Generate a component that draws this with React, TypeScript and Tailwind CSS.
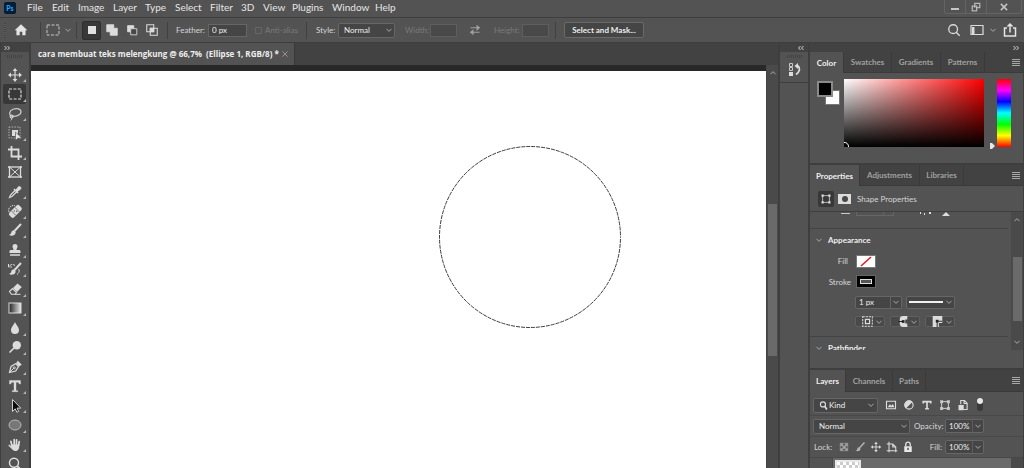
import type { ReactNode } from "react";

const Caret = ({ className = "" }: { className?: string }) => (
    <svg viewBox="0 0 8 8" className={`w-2 h-2 shrink-0 fill-none stroke-[#a8a8a8] pointer-events-none ${className}`}>
        <path d="M1.5 2.8 4 5.4 6.5 2.8" />
    </svg>
);

const Chevrons = ({ flip = false }: { flip?: boolean }) => (
    <svg viewBox="0 0 8 6" className={`w-2 h-[6px] fill-none stroke-[#d4d4d4] ${flip ? "rotate-180" : ""}`}>
        <path d="M1.5 1 3.5 3 1.5 5M4.5 1 6.5 3 4.5 5" />
    </svg>
);

const Icon = ({ children, className = "w-4 h-4" }: { children: ReactNode; className?: string }) => (
    <svg viewBox="0 0 16 16" className={`shrink-0 fill-none stroke-[#dcdcdc] ${className}`}>
        {children}
    </svg>
);

const Divider = () => <span className="w-px h-[17px] bg-[#404040] shrink-0" />;

const FILL = "#dcdcdc";

const moveShape = (
    <>
        <path d="M8 3v10M3 8h10" strokeWidth="1.2" />
        <path d="M8 1 10.4 4H5.6zM8 15l2.4-3H5.6zM1 8l3-2.4v4.8zM15 8l-3-2.4v4.8z" fill={FILL} stroke="none" />
    </>
);

const brushShape = (
    <>
        <path d="M14 2 7.5 9" strokeWidth="2" />
        <path d="M7.6 8.4C5.8 8 4.6 9 4.3 10.6 4 12 3.2 12.7 2 13c2.4 1.3 6.2.7 6.7-2.3z" fill={FILL} stroke="none" />
    </>
);

const tools: { name: string; art: ReactNode }[] = [
    { name: "Move", art: moveShape },
    { name: "Rectangular Marquee", art: <rect x="2" y="3" width="12" height="10" strokeDasharray="3 1.4" strokeWidth="1.2" /> },
    {
        name: "Lasso",
        art: (
            <>
                <path d="M4.5 10.3C1.5 8.6 2.3 4.6 6 3.2c3.6-1.4 8-.5 8 2.5 0 3-4.6 5.3-9.5 4.6" strokeWidth="1.2" stroke="#c8c8c8" />
                <circle cx="4.6" cy="10.5" r="1.5" strokeWidth="1.1" />
                <path d="M4.5 12c.6 1 0 2-.8 2.5" />
            </>
        ),
    },
    {
        name: "Object Selection",
        art: (
            <>
                <rect x="2" y="2" width="11" height="11" strokeDasharray="1.5 1.2" stroke="#b0b0b0" />
                <path d="M5 5h6v3.500H8.500V11H5z" fill={FILL} stroke="none" />
                <path d="M8.500 7v8.500l2.300-2.300h4z" fill="#e8e8e8" stroke="#535353" strokeWidth=".6" />
            </>
        ),
    },
    { name: "Crop", art: <path d="M4.5 1v10.500H15M1 4.500h10.500V15" strokeWidth="1.800" /> },
    {
        name: "Frame",
        art: (
            <>
                <rect x="2.5" y="3" width="11" height="10" strokeWidth="1.3" />
                <path d="M2.5 3l11 10M13.5 3l-11 10" />
                <path d="M1 3h2M13 3h2M1 13h2M13 13h2" strokeWidth="1.5" />
            </>
        ),
    },
    {
        name: "Eyedropper",
        art: (
            <>
                <path d="M8.5 6 3.5 11l-1 2.500L5 12.500l5-5" strokeWidth="1.2" />
                <path d="M7 5l4 4M9.5 6.500l3.300-3.300" strokeWidth="1.5" />
                <path d="m9 6 2.500-3.200a1.600 1.600 0 0 1 2.200 2.200L10.300 7.500z" fill={FILL} strokeWidth="1" />
            </>
        ),
    },
    {
        name: "Spot Healing",
        art: (
            <>
                <path d="M2 9C.5 5 4 1.500 8 2.800" strokeDasharray="1.5 1" />
                <g transform="rotate(-45 8.5 8.5)">
                    <rect x="1.5" y="5" width="14" height="6.600" rx="2" fill={FILL} stroke="none" />
                    <path d="M6 5v6.600M11 5v6.600" stroke="#666" strokeWidth=".8" />
                    <path d="M7.5 7.300h1M9 9.300h1" stroke="#444" strokeWidth="1.2" />
                </g>
            </>
        ),
    },
    { name: "Brush", art: brushShape },
    {
        name: "Clone Stamp",
        art: (
            <path
                d="M5.5 4.500a2.500 2.500 0 0 1 5 0C10.500 6 9.500 6.500 9.500 8H12c1 0 1.500.5 1.500 1.500V11h-11V9.500C2.500 8.500 3 8 4 8h2.500C6.500 6.500 5.500 6 5.500 4.500zM3 12.300h10v1.500H3z"
                fill={FILL}
                stroke="none"
            />
        ),
    },
    {
        name: "History Brush",
        art: (
            <>
                {brushShape}
                <path d="M2 5.500C4 3 6 3 8 4.500M1.500 3v3H5M11.500 8c1.500 2 .5 4-1.500 5.500" strokeDasharray="4 .8" />
            </>
        ),
    },
    {
        name: "Eraser",
        art: (
            <>
                <path d="m2.500 10.500 3-3 4 4-1.500 1.800H4.500z" strokeWidth="1.1" />
                <path d="m6 7 4.500-4.500 4.300 3.600L10 11z" fill={FILL} stroke="none" />
                <path d="M8 13.300h5.500" />
            </>
        ),
    },
    {
        name: "Gradient",
        art: (
            <>
                <defs>
                    <linearGradient id="toolGradient">
                        <stop offset="0" stopColor="#222" />
                        <stop offset="1" stopColor="#e8e8e8" />
                    </linearGradient>
                </defs>
                <rect x="2" y="3" width="12" height="10" fill="url(#toolGradient)" />
            </>
        ),
    },
    { name: "Blur", art: <path d="M8 2C7 5 4 7 4 10a4 4 0 0 0 8 0C12 7 9 5 8 2z" fill={FILL} stroke="none" /> },
    {
        name: "Dodge",
        art: (
            <>
                <circle cx="9.800" cy="6.200" r="4.200" fill={FILL} stroke="none" />
                <path d="M7.500 8.500 2.500 13.500" strokeWidth="1.600" />
            </>
        ),
    },
    {
        name: "Pen",
        art: (
            <>
                <path d="M2.500 13.500 4 7.500l4.500-2.800 3 3L8.700 12z" strokeWidth="1.2" />
                <path d="m9 4.300 1.800-2.500 4 4L12 7.400z" fill={FILL} stroke="none" />
                <path d="M3 13l3.800-3.800" />
                <circle cx="7.300" cy="8.800" r="1" />
            </>
        ),
    },
    {
        name: "Type",
        art: (
            <path
                d="M2.500 2.500h11V6h-1.300c-.2-1.300-.7-1.800-2-1.800H9v7.600c0 .7.400.9 1.800 1v.9H5.200v-.9c1.400-.1 1.800-.3 1.800-1V4.200H5.800c-1.300 0-1.800.5-2 1.800H2.500z"
                fill={FILL}
                stroke={FILL}
                strokeWidth=".4"
            />
        ),
    },
    { name: "Path Selection", art: <path d="M5.500 1.500v12L8.200 10.800l1.700 3.500 1.800-.9-1.700-3.300h3.800z" fill="#0c0c0c" stroke="#d0d0d0" /> },
    { name: "Ellipse", art: <ellipse cx="8" cy="8" rx="6" ry="5" fill="#777" stroke="#b8b8b8" /> },
    {
        name: "Hand",
        art: (
            <>
                <path d="M4.900 8.500 3.900 4.300M7.200 8V2.700M9.400 8l.2-5.200M11.500 8.500l.8-4M5.500 11.500 2.300 8.500" strokeWidth="1.7" strokeLinecap="round" />
                <path d="M4.200 7.500h8.200c0 3.800-1 6.500-4 6.500-2.200 0-4.200-2-4.200-6.500z" fill={FILL} stroke="none" />
            </>
        ),
    },
    {
        name: "Zoom",
        art: (
            <>
                <circle cx="7" cy="6.800" r="4.500" strokeWidth="1.500" />
                <path d="m10.300 10.300 4 4" strokeWidth="2" />
            </>
        ),
    },
];

const MenuBar = () => (
    <header className="flex h-[18px] shrink-0 border-b border-[#3e3e3e] bg-[#535353]">
        <span className="ml-1 mt-[2px] flex h-3 w-3 items-center justify-center rounded-[2px] bg-[#001e36] text-[7px] font-bold text-[#31a8ff]">Ps</span>
        <nav className="ml-[11px] flex h-[15px] items-center text-[10px] text-[#e6e6e6] *:text-left">
            <button className="w-[25px]">File</button>
            <button className="w-[26px]">Edit</button>
            <button className="w-[35px]">Image</button>
            <button className="w-[32px]">Layer</button>
            <button className="w-[30px]">Type</button>
            <button className="w-[35px]">Select</button>
            <button className="w-[31px]">Filter</button>
            <button className="w-[22px]">3D</button>
            <button className="w-[29px]">View</button>
            <button className="w-[40px]">Plugins</button>
            <button className="w-[43px]">Window</button>
            <button className="w-[27px]">Help</button>
        </nav>
        <div className="ml-auto mr-[2px] flex h-[14px] rounded-b-[3px] border border-t-0 border-[#646464]">
            <button aria-label="Minimize" className="flex w-[21px] items-center justify-center border-r border-[#646464]">
                <span className="mt-1 h-[2px] w-2 bg-[#c4c4c4]" />
            </button>
            <button aria-label="Restore" className="flex w-[21px] items-center justify-center border-r border-[#646464]">
                <Icon className="h-[10px] w-[10px]">
                    <path d="M6 9V2h8v7H9M2 6.500h7V14H2z" strokeWidth="2" stroke="#b8b8b8" />
                </Icon>
            </button>
            <button aria-label="Close" className="flex w-[34px] items-center justify-center">
                <Icon className="h-[10px] w-[10px]">
                    <path d="m3 3 10 10M13 3 3 13" strokeWidth="2.4" stroke="#c4c4c4" />
                </Icon>
            </button>
        </div>
    </header>
);

const OptionsBar = () => (
    <div className="flex h-[25px] shrink-0 items-center border-b border-[#3e3e3e] bg-[#535353] text-[8px]">
        <span className="ml-1 h-[15px] w-[2px] bg-[repeating-linear-gradient(#444_0_1px,#5c5c5c_1px_2px)]" />
        <button aria-label="Home" className="ml-2">
            <Icon className="h-[14px] w-[14px]">
                <path d="M8 1.500.8 8.200h2V14h3.700v-4h3v4h3.700V8.200h2z" fill="#e4e4e4" stroke="none" />
            </Icon>
        </button>
        <span className="w-3" />
        <Divider />
        <button aria-label="Tool preset" className="ml-1 flex w-[31px] items-center gap-[3px]">
            <Icon>
                <rect x="2" y="3" width="12" height="10" strokeDasharray="3 1.5" stroke="#c8c8c8" />
            </Icon>
            <Caret />
        </button>
        <Divider />
        <div className="ml-[5px] flex items-center gap-[1px]">
            <button aria-label="New selection" className="flex h-[19px] w-[19px] items-center justify-center rounded-[2px] border border-[#2e2e2e] bg-[#383838]">
                <span className="h-2 w-2 bg-[#e0e0e0]" />
            </button>
            <button aria-label="Add to selection" className="flex w-[19px] justify-center">
                <Icon className="h-[14px] w-[14px]">
                    <path d="M2 2h8v4h4v8H6v-4H2z" fill={FILL} />
                </Icon>
            </button>
            <button aria-label="Subtract from selection" className="flex w-[19px] justify-center">
                <Icon className="h-[14px] w-[14px]">
                    <path d="M3 3h7v3H6v4H3z" fill={FILL} />
                    <path d="M6.5 6.500h7v7h-7z" fill="#484848" />
                </Icon>
            </button>
            <button aria-label="Intersect with selection" className="flex w-[19px] justify-center">
                <Icon className="h-[14px] w-[14px]">
                    <path d="M2 2h8v8H2zM6 6h8v8H6z" strokeWidth="1.2" />
                    <path d="M6 6h4v4H6z" fill={FILL} />
                </Icon>
            </button>
        </div>
        <span className="w-[6px]" />
        <Divider />
        <label htmlFor="feather" className="ml-2 w-[32px] text-[#d6d6d6]">Feather:</label>
        <input id="feather" defaultValue="0 px" className="h-[13px] w-[39px] border border-[#666] bg-[#454545] px-[3px] text-[#eee]" />
        <label className="ml-2 flex w-[51px] items-center gap-[3px] text-[#7a7a7a]">
            <input type="checkbox" disabled className="h-[7px] w-[7px] shrink-0 appearance-none rounded-[1px] border border-[#666]" />
            Anti-alias
        </label>
        <Divider />
        <label htmlFor="style" className="ml-[9px] w-[22px] text-[#d6d6d6]">Style:</label>
        <div className="grid h-[15px] w-[57px] shrink-0 items-center rounded-[2px] border border-[#666] bg-[#454545]">
            <select id="style" className="col-start-1 row-start-1 appearance-none pl-[5px] text-[#eee]">
                <option>Normal</option>
            </select>
            <Caret className="col-start-1 row-start-1 mr-px justify-self-end" />
        </div>
        <label htmlFor="width" className="ml-[10px] w-[25px] text-[#7a7a7a]">Width:</label>
        <input id="width" disabled className="h-[13px] w-[27px] border border-[#5e5e5e] bg-[#494949]" />
        <button aria-label="Swap width and height" className="ml-3">
            <Icon className="h-3 w-3">
                <path d="M2 5h9M5 11h9" strokeWidth="1.6" stroke="#a0a0a0" />
                <path d="m10 1 5 4-5 4zM6 7l-5 4 5 4z" fill="#a0a0a0" stroke="none" />
            </Icon>
        </button>
        <label htmlFor="height" className="ml-[13px] w-[28px] text-[#7a7a7a]">Height:</label>
        <input id="height" disabled className="h-[13px] w-[27px] border border-[#5e5e5e] bg-[#494949]" />
        <span className="w-[6px]" />
        <Divider />
        <button className="ml-2 h-4 w-[80px] shrink-0 rounded-[2px] border border-[#6a6a6a] bg-[#454545] font-bold text-[#eee]">Select and Mask...</button>
        <div className="ml-auto mr-[6px] flex items-center">
            <button aria-label="Search">
                <Icon className="h-[14px] w-[14px]">
                    <circle cx="7" cy="7" r="5" strokeWidth="1.5" />
                    <path d="m10.500 10.500 4 4" strokeWidth="1.6" />
                </Icon>
            </button>
            <button aria-label="Workspace" className="ml-2 flex items-center gap-1">
                <Icon>
                    <path d="M2 3.500h12v9H2z" strokeWidth="1.2" />
                    <path d="M3 5h2.500v7H3z" fill={FILL} stroke="none" />
                </Icon>
                <Caret />
            </button>
            <button aria-label="Share" className="ml-[5px]">
                <Icon>
                    <path d="M5 6H2.500v8h11V6H11M8 10.500V2M5.500 4.500 8 2l2.500 2.500" strokeWidth="1.5" stroke="#e4e4e4" />
                </Icon>
            </button>
        </div>
    </div>
);

const Toolbar = () => (
    <aside className="flex w-[31px] shrink-0 flex-col border-x-[1px] border-r-2 border-[#3e3e3e] bg-[#535353]">
        <div className="flex h-[9px] shrink-0 items-center bg-[#424242] pl-[2px]">
            <Chevrons />
        </div>
        <div className="h-[13px] shrink-0 pl-[6px] pt-[3px]">
            <div className="h-[3px] w-[15px] bg-[repeating-linear-gradient(90deg,#444_0_1px,#535353_1px_2px)]" />
        </div>
        <div className="flex h-[409px] shrink-0 flex-col">
            {tools.map((tool, i) => (
                <button
                    key={tool.name}
                    aria-label={tool.name}
                    className={`ml-[2px] flex min-h-0 w-[23px] flex-1 items-center justify-end rounded-[2px] ${i === 1 ? "bg-[#383838]" : ""}`}
                >
                    <Icon className="h-4 w-4">{tool.art}</Icon>
                    <svg viewBox="0 0 3 3" className="mb-[2px] h-[3px] w-[3px] shrink-0 self-end fill-[#b8b8b8]">
                        {tool.name !== "Frame" && <path d="M3 0v3H0z" />}
                    </svg>
                </button>
            ))}
        </div>
    </aside>
);

const Workspace = () => (
    <main className="flex min-w-0 flex-1 flex-col bg-[#424242]">
        <div className="flex h-[22px] shrink-0">
            <div className="flex w-[264px] items-center border-r border-[#3a3a3a] bg-[#535353] pl-[7px] font-['Open_Sans','Noto_Sans',sans-serif] text-[8px] font-bold text-[#eee]">
                <span className="w-[244px] whitespace-pre">cara membuat teks melengkung @ 66,7%  (Ellipse 1, RGB/8) *</span>
                <button aria-label="Close document">
                    <Icon className="h-[6px] w-[6px]">
                        <path d="m1 1 14 14M15 1 1 15" strokeWidth="2" stroke="#a8a8a8" />
                    </Icon>
                </button>
            </div>
        </div>
        <div className="flex min-h-0 flex-1">
            <div className="flex min-w-0 flex-1 flex-col border-t-[6px] border-[#282828]">
                <div className="relative min-h-0 flex-1 bg-white">
                    <svg viewBox="0 0 184 184" className="absolute left-[407px] top-[74px] w-[184px] h-[184px] fill-none">
                        <circle cx="92" cy="92" r="90.5" stroke="#3c3c3c" strokeDasharray="4 1" strokeDashoffset="-2" />
                    </svg>
                </div>
            </div>
            <div className="flex w-[12px] shrink-0 flex-col items-center border-l border-[#444] bg-[#4a4a4a] pt-1">
                <Caret className="rotate-180" />
                <div className="mt-[127px] h-[152px] w-[9px] bg-[#6a6a6a]" />
            </div>
        </div>
    </main>
);

const IconStrip = () => (
    <aside className="flex w-[32px] shrink-0 flex-col border-x-2 border-[#3e3e3e] bg-[#535353]">
        <div className="flex h-[9px] shrink-0 items-center justify-end bg-[#424242] pr-[3px]">
            <Chevrons flip />
        </div>
        <div className="flex h-[31px] flex-col items-center border-b border-[#3e3e3e] pt-[3px]">
            <div className="h-[3px] w-[15px] bg-[repeating-linear-gradient(90deg,#444_0_1px,#535353_1px_2px)]" />
            <button aria-label="History" className="mt-1">
                <Icon>
                    <path d="M3.500 1.500h3v3h-3zM3.500 5.500h3v3h-3z" stroke="#c8c8c8" />
                    <path d="M3 10h4v4H3z" fill={FILL} stroke="none" />
                    <path d="M10 4h2c2.500 2 2 5.500-2 8.500" strokeWidth="1.8" />
                    <path d="M8.500 4 12 1v6z" fill={FILL} stroke="none" />
                </Icon>
            </button>
        </div>
    </aside>
);

// tab widths differ per panel, so each tab brings its own
const PanelTabs = ({ tabs, height }: { tabs: [string, string][]; height: string }) => (
    <div className={`flex shrink-0 bg-[#424242] text-[8px] font-bold ${height}`}>
        {tabs.map(([name, width], i) => (
            <button
                key={name}
                className={`${width} shrink-0 border-r border-[#3a3a3a] ${i === 0 ? "bg-[#535353] text-[#f0f0f0]" : "border-b text-[#a0a0a0]"}`}
            >
                {name}
            </button>
        ))}
        <span className="flex-1 border-b border-[#3a3a3a]" />
        <button aria-label="Panel menu" className="flex items-center border-b border-[#3a3a3a] pr-[3px]">
            <svg viewBox="0 0 8 7" className="h-[7px] w-2 stroke-[#a8a8a8]">
                <path d="M0 .5h8M0 2.500h8M0 4.500h8M0 6.500h8" />
            </svg>
        </button>
    </div>
);

const ColorPanel = () => (
    <section className="shrink-0 border-b-2 border-[#3e3e3e]">
        <PanelTabs
            height="h-[21px]"
            tabs={[
                ["Color", "w-[34px]"],
                ["Swatches", "w-[48px]"],
                ["Gradients", "w-[49px]"],
                ["Patterns", "w-[44px]"],
            ]}
        />
        <div className="flex h-[90px] pt-[6px]">
            <div className="relative ml-[7px] mt-[2px] h-6 w-[23px] shrink-0">
                <button aria-label="Background color" className="absolute bottom-0 right-0 h-[15px] w-[15px] border border-[#777] bg-white" />
                <button aria-label="Foreground color" className="absolute left-0 top-0 h-4 w-4 border-2 border-[#8a8a8a] bg-black" />
            </div>
            <div className="ml-1 flex h-[68px] flex-1 items-end bg-[linear-gradient(to_top,#000,transparent),linear-gradient(to_right,#fff,#f00)]">
                <svg viewBox="0 0 6 6" className="h-[6px] w-[6px] fill-none stroke-white">
                    <path d="M0 1.500A4 4 0 0 1 4.500 6" />
                </svg>
            </div>
            <svg viewBox="0 0 5 6" className="ml-[6px] mt-[64px] h-[6px] w-[5px] fill-[#e8e8e8]">
                <path d="M0 0h2l3 3-3 3H0z" />
            </svg>
            <div className="ml-[2px] mr-3 h-[68px] w-[14px] bg-[linear-gradient(#f00,#f0f,#00f,#0ff,#0f0,#ff0,#f00)]" />
        </div>
    </section>
);

const Field = ({ id, label, value }: { id: string; label: string; value: string }) => (
    <>
        <label htmlFor={id} className="w-[28px] shrink-0 text-right">{label}</label>
        <div className="ml-[3px] flex h-[14px] items-center rounded-[2px] border border-[#666] bg-[#454545]">
            <input id={id} defaultValue={value} className="w-[26px] pl-[3px] text-[#eee]" />
            <span className="flex h-full w-[11px] items-center justify-center border-l border-[#5c5c5c]">
                <Caret />
            </span>
        </div>
    </>
);

const SectionTitle = ({ children }: { children: ReactNode }) => (
    <h2 className="flex items-center gap-[5px] pl-[5px] font-bold text-[#eee]">
        <Caret /> {children}
    </h2>
);

const StrokeOption = ({ label, children }: { label: string; children: ReactNode }) => (
    <button aria-label={label} className="flex h-[11px] w-[30px] items-center justify-end gap-[2px] rounded-[2px] border border-[#606060] bg-[#494949] pr-px">
        <Icon className="h-[11px] w-[11px]">{children}</Icon>
        <Caret />
    </button>
);

const PropertiesPanel = () => (
    <section className="flex h-[205px] shrink-0 flex-col border-b-2 border-[#3e3e3e] text-[8px] text-[#d6d6d6]">
        <PanelTabs
            height="h-[21px]"
            tabs={[
                ["Properties", "w-[50px]"],
                ["Adjustments", "w-[60px]"],
                ["Libraries", "w-[44px]"],
            ]}
        />
        <div className="flex h-[26px] shrink-0 items-center border-b border-[#3e3e3e] pl-2">
            <button aria-label="Shape" className="flex h-4 w-4 items-center justify-center rounded-[2px] bg-[#383838]">
                <Icon className="h-3 w-3">
                    <path d="M3.500 3.500h9v9h-9z" />
                    <path d="M2 2h3v3H2zM11 2h3v3h-3zM2 11h3v3H2zM11 11h3v3h-3z" fill={FILL} stroke="none" />
                </Icon>
            </button>
            <button aria-label="Mask" className="ml-1 flex h-[10px] w-[13px] items-center justify-center bg-[#dcdcdc]">
                <span className="h-[6px] w-[6px] rounded-full bg-[#484848]" />
            </button>
            <span className="ml-[6px]">Shape Properties</span>
        </div>
        <div className="flex h-[138px]">
            <div className="mr-[3px] flex flex-1 flex-col overflow-hidden">
                <div className="flex h-[17px] shrink-0 items-start border-b border-[#444] pl-[31px]">
                    <span className="h-[2px] w-[9px] border-b border-[#c8c8c8]" />
                    <span className="ml-[6px] h-1 w-[28px] border border-t-0 border-[#666]" />
                    <span className="h-1 w-[10px] border border-l-0 border-t-0 border-[#666]" />
                    <svg viewBox="0 0 34 4" className="ml-[25px] h-1 w-[34px] fill-[#dcdcdc]">
                        <path d="M1 0h1v2H1zM5 1h1v2H5zM10 0h2v2h-2zM27 0 31 4h-8z" />
                    </svg>
                </div>
                <div className="flex h-[22px] shrink-0 items-center">
                    <SectionTitle>Appearance</SectionTitle>
                </div>
                <div className="flex h-[20px] shrink-0 items-center">
                    <span className="w-[38px] text-right">Fill</span>
                    <button aria-label="Fill" className="ml-2 h-[13px] w-[20px] border border-[#777] bg-white">
                        <svg viewBox="0 0 18 11" className="h-full w-full stroke-[#e02020]">
                            <path d="M4 10 14 1" strokeWidth="1.600" />
                        </svg>
                    </button>
                </div>
                <div className="flex h-[21px] shrink-0 items-center">
                    <span className="w-[41px] text-right">Stroke</span>
                    <button aria-label="Stroke" className="ml-[5px] flex h-[13px] w-[20px] items-center justify-center border border-[#666] bg-black">
                        <span className="h-[5px] w-3 border border-[#ddd] bg-[#555]" />
                    </button>
                </div>
                <div className="flex h-[20px] shrink-0 items-center pl-[45px]">
                    <input aria-label="Stroke width" defaultValue="1 px" className="h-[13px] w-[36px] rounded-l-[2px] border border-[#666] bg-[#454545] pl-[3px] text-[#eee]" />
                    <span className="flex h-[13px] w-[11px] items-center justify-center rounded-r-[2px] border border-l-0 border-[#666] bg-[#454545]">
                        <Caret />
                    </span>
                    <button aria-label="Stroke type" className="ml-1 flex h-[13px] w-[49px] items-center justify-between rounded-[2px] border border-[#666] bg-[#454545] px-px">
                        <span className="ml-px h-[2px] w-[34px] bg-[#f0f0f0]" />
                        <Caret />
                    </button>
                </div>
                <div className="flex h-[25px] shrink-0 gap-[5px] border-b border-[#444] pl-[45px] pt-1">
                    <StrokeOption label="Align">
                        <path d="M1 1h14v14H1z" strokeWidth="1.5" strokeDasharray="3 1.500" />
                        <path d="M5 5h6v6H5z" strokeWidth="1.800" />
                    </StrokeOption>
                    <StrokeOption label="Caps">
                        <path d="M15 0H9a5 5 0 0 0-5 5v6a5 5 0 0 0 5 5h6v-5h-3V5h3z" fill={FILL} stroke="none" />
                        <path d="M2 8h7" stroke="#222" strokeWidth="1.500" />
                        <path d="M7 6h4v4H7z" fill="#222" stroke="none" />
                    </StrokeOption>
                    <StrokeOption label="Corners">
                        <path d="M1 0h14v10h-5v6H1z" fill={FILL} stroke="none" />
                        <path d="M7.500 16V7.500H15" stroke="#333" strokeWidth="1.500" />
                        <path d="M5.500 5.500h4v4h-4z" fill="#222" stroke="none" />
                    </StrokeOption>
                </div>
                <div className="h-[13px] shrink-0 overflow-hidden pt-1 leading-[14px]">
                    <SectionTitle>Pathfinder</SectionTitle>
                </div>
            </div>
            <div className="flex w-[12px] shrink-0 flex-col items-center bg-[#4a4a4a] pt-1">
                <Caret className="rotate-180" />
                <div className="mt-[33px] h-[64px] w-[9px] bg-[#6a6a6a]" />
                <Caret className="mt-[17px]" />
            </div>
        </div>
    </section>
);

const LayersPanel = () => (
    <section className="flex min-h-0 flex-1 flex-col text-[8px] text-[#d6d6d6]">
        <PanelTabs
            height="h-[22px]"
            tabs={[
                ["Layers", "w-[36px]"],
                ["Channels", "w-[47px]"],
                ["Paths", "w-[33px]"],
            ]}
        />
        <div className="flex h-[24px] shrink-0 items-center border-b border-[#484848] pl-[3px] pt-[3px]">
            <div className="grid h-[15px] w-[65px] items-center rounded-[2px] border border-[#666] bg-[#454545]">
                <Icon className="col-start-1 row-start-1 ml-[5px] h-[9px] w-[9px]">
                    <circle cx="7" cy="6" r="4.500" strokeWidth="2" />
                    <path d="m10 9 4 6" strokeWidth="3" />
                </Icon>
                <select aria-label="Filter kind" className="col-start-1 row-start-1 appearance-none pl-[15px] text-[#eee]">
                    <option>Kind</option>
                </select>
                <Caret className="col-start-1 row-start-1 mr-[2px] justify-self-end" />
            </div>
            <div className="ml-[7px] flex items-center gap-[6px]">
                <button aria-label="Pixel layers">
                    <Icon className="h-3 w-3">
                        <path d="M2 3h12v10H2z" strokeWidth="1.500" />
                        <path d="m3.500 11 3-4 2 2 2-2.500 2 4.500z" fill={FILL} stroke="none" />
                    </Icon>
                </button>
                <button aria-label="Adjustment layers">
                    <Icon className="h-3 w-3">
                        <circle cx="8" cy="8" r="5.500" strokeWidth="1.500" />
                        <path d="M4 12A5.600 5.600 0 0 1 12 4z" fill={FILL} />
                    </Icon>
                </button>
                <button aria-label="Type layers">
                    <Icon className="h-3 w-3">
                        <path d="M3 6V3.500h10V6M8 3.500v9M5.500 13h5" strokeWidth="2.200" />
                    </Icon>
                </button>
                <button aria-label="Shape layers">
                    <Icon className="h-3 w-3">
                        <path d="M3.500 3.500h9v9h-9z" strokeWidth="1.200" />
                        <path d="M1.500 1.500h4v4h-4zM10.500 1.500h4v4h-4zM1.500 10.500h4v4h-4zM10.500 10.500h4v4h-4z" fill="#c8c8c8" stroke="none" />
                    </Icon>
                </button>
                <button aria-label="Smart objects">
                    <Icon className="h-3 w-3">
                        <path d="M5 7V2h5l3.500 3.500V14H9M9.500 2v4H13" strokeWidth="1.500" />
                        <path d="M2 8h7v7H2z" fill={FILL} stroke="none" />
                    </Icon>
                </button>
            </div>
            <button aria-label="Toggle filter" className="mb-[2px] ml-2 flex h-[13px] w-[6px] items-start rounded-full bg-[#3a3a3a]">
                <span className="h-[6px] w-[6px] rounded-full bg-[#e8e8e8]" />
            </button>
        </div>
        <div className="flex h-[21px] shrink-0 items-center border-b border-[#484848] pl-[3px]">
            <div className="grid h-[15px] w-[97px] items-center rounded-[2px] border border-[#666] bg-[#454545]">
                <select aria-label="Blend mode" className="col-start-1 row-start-1 appearance-none pl-[5px] text-[#eee]">
                    <option>Normal</option>
                </select>
                <Caret className="col-start-1 row-start-1 mr-px justify-self-end" />
            </div>
            <span className="w-1" />
            <Field id="opacity" label="Opacity:" value="100%" />
        </div>
        <div className="flex h-[21px] shrink-0 items-center border-b border-[#484848] pl-1">
            <span className="w-[24px]">Lock:</span>
            <div className="flex w-[76px] items-center gap-1">
                <button aria-label="Lock transparent pixels">
                    <Icon className="h-3 w-3">
                        <path d="M3 3h10v10H3zM6.500 3v10M10 3v10M3 6.500h10M3 10h10" stroke="#969696" />
                        <path d="M3 3h3.500v3.500H3zM10 3h3v3.500h-3zM6.500 6.500H10V10H6.500zM3 10h3.500v3H3zM10 10h3v3h-3z" fill="#a0a0a0" stroke="none" />
                    </Icon>
                </button>
                <button aria-label="Lock image pixels" className="opacity-70">
                    <Icon className="h-3 w-3">{brushShape}</Icon>
                </button>
                <button aria-label="Lock position">
                    <Icon className="h-3 w-3">{moveShape}</Icon>
                </button>
                <button aria-label="Lock artboard nesting">
                    <Icon className="h-3 w-3">
                        <path d="M4 1v14M1 4h8l4 4v7M1 13h14M9 4v4h4" strokeWidth="1.400" />
                    </Icon>
                </button>
                <button aria-label="Lock all">
                    <Icon className="h-3 w-3">
                        <path d="M5 7V4.500a3 3 0 0 1 6 0V7" strokeWidth="1.800" />
                        <path d="M3 7h10v7.500H3zM7 9v3h2V9z" fill="#e8e8e8" fillRule="evenodd" stroke="none" />
                    </Icon>
                </button>
            </div>
            <Field id="fill" label="Fill:" value="100%" />
        </div>
        <div className="flex min-h-0 flex-1 overflow-hidden">
            <span className="w-[23px] border-r border-[#484848]" />
            <div className="flex flex-1 items-start bg-[#6a6a6a] pl-[2px] pt-[2px]">
                <div className="h-[18px] w-[26px] shrink-0 border-2 border-[#e8e8e8] bg-[repeating-conic-gradient(#ccc_0_25%,#fff_0_50%)] bg-[length:6px_6px]" />
            </div>
            <span className="w-[12px] bg-[#4a4a4a]" />
        </div>
    </section>
);

export default function App() {
    return (
        <div className="flex h-screen flex-col overflow-hidden bg-[#535353] font-['Lato','Open_Sans',sans-serif]">
            <MenuBar />
            <OptionsBar />
            <div className="flex min-h-0 flex-1">
                <Toolbar />
                <Workspace />
                <IconStrip />
                <aside className="flex w-[214px] shrink-0 flex-col border-r border-[#3e3e3e] bg-[#535353]">
                    <div className="flex h-[9px] shrink-0 items-center justify-end bg-[#424242] pr-[3px]">
                        <Chevrons />
                    </div>
                    <ColorPanel />
                    <PropertiesPanel />
                    <LayersPanel />
                </aside>
            </div>
        </div>
    );
}
